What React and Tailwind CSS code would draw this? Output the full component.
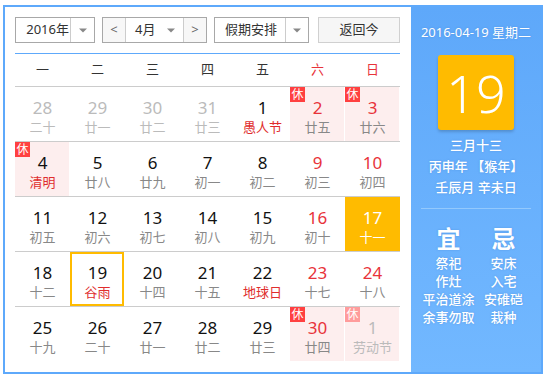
import React from "react";

const FONT = { fontFamily: '"Noto Sans", "Noto Sans CJK SC", sans-serif' };

const weeks = [
  [
    { d: 28, l: "二十", o: true },
    { d: 29, l: "廿一", o: true },
    { d: 30, l: "廿二", o: true },
    { d: 31, l: "廿三", o: true },
    { d: 1, l: "愚人节", f: true },
    { d: 2, l: "廿五", h: true },
    { d: 3, l: "廿六", h: true },
  ],
  [
    { d: 4, l: "清明", h: true, f: true },
    { d: 5, l: "廿八" },
    { d: 6, l: "廿九" },
    { d: 7, l: "初一" },
    { d: 8, l: "初二" },
    { d: 9, l: "初三" },
    { d: 10, l: "初四" },
  ],
  [
    { d: 11, l: "初五" },
    { d: 12, l: "初六" },
    { d: 13, l: "初七" },
    { d: 14, l: "初八" },
    { d: 15, l: "初九" },
    { d: 16, l: "初十" },
    { d: 17, l: "十一", t: true },
  ],
  [
    { d: 18, l: "十二" },
    { d: 19, l: "谷雨", f: true, s: true },
    { d: 20, l: "十四" },
    { d: 21, l: "十五" },
    { d: 22, l: "地球日", f: true },
    { d: 23, l: "十七" },
    { d: 24, l: "十八" },
  ],
  [
    { d: 25, l: "十九" },
    { d: 26, l: "二十" },
    { d: 27, l: "廿一" },
    { d: 28, l: "廿二" },
    { d: 29, l: "廿三" },
    { d: 30, l: "廿四", h: true },
    { d: 1, l: "劳动节", h: true, o: true },
  ],
];

function Arrow() {
  return (
    <svg width="8" height="5" viewBox="0 0 8 5">
      <path d="M0 0.5 L8 0.5 L4 4.5 Z" fill="#888" />
    </svg>
  );
}

function Cell({ c, col }) {
  const weekend = col >= 5;
  let numColor = "text-[#111]";
  let lunColor = "text-[#888]";
  if (weekend) numColor = "text-[#e8333a]";
  if (c.f) lunColor = "text-[#e02d2d]";
  if (c.o) {
    numColor = "text-[#bbb]";
    lunColor = "text-[#bbb]";
  }
  if (c.t) {
    numColor = "text-white";
    lunColor = "text-white";
  }
  let bg = "";
  if (c.h) bg = "bg-[#fdeeee]";
  if (c.t) bg = "bg-[#ffbb00]";
  return (
    <div className="relative h-[54px]">
      <div
        className={`absolute top-0 left-0 bottom-0 ${c.t ? "right-0" : "right-[1px]"} ${bg} ${
          c.s ? "border-2 border-[#ffbb00]" : ""
        }`}
      />
      {c.h && (
        <div
          className={`absolute top-0 left-0 w-[15px] h-[15px] flex items-center justify-center text-[12px] leading-none text-white ${
            c.o ? "bg-[#ff9c9c]" : "bg-[#ff4040]"
          }`}
        >
          休
        </div>
      )}
      <div className="relative flex flex-col items-center pt-[11px]">
        <div className={`text-[17px] leading-[20px] ${numColor}`}>{c.d}</div>
        <div className={`text-[13px] leading-[18px] ${lunColor}`}>{c.l}</div>
      </div>
    </div>
  );
}

export default function App() {
  const heads = ["一", "二", "三", "四", "五", "六", "日"];
  return (
    <div className="w-[545px] h-[378px] bg-white pt-[5px] pl-[3px]" style={FONT}>
      <div className="w-[540px] h-[369px] border-2 border-[#5ea9fb] flex">
        {/* Left */}
        <div className="w-[406px] pl-[10px] pr-[11px] pt-[10px]">
          <div className="flex items-center h-[26px] text-[13px] text-[#333]">
            <div className="w-[80px] h-[26px] border border-[#a8a8a8] flex">
              <div className="w-[54px] flex items-center justify-end pr-[1px]">2016年</div>
              <div className="flex-1 border-l border-[#ccc] flex items-center justify-center">
                <Arrow />
              </div>
            </div>
            <div className="ml-[7px] w-[105px] h-[26px] border border-[#a8a8a8] flex">
              <div className="w-[22px] bg-[#f7f7f7] flex items-center justify-center text-[#666]">&lt;</div>
              <div className="flex-1 border-l border-r border-[#ccc] flex items-center">
                <span className="ml-[9px]">4月</span>
                <span className="ml-auto mr-[8px] flex">
                  <Arrow />
                </span>
              </div>
              <div className="w-[22px] bg-[#f7f7f7] flex items-center justify-center text-[#666]">&gt;</div>
            </div>
            <div className="ml-[7px] w-[95px] h-[26px] border border-[#a8a8a8] flex">
              <div className="w-[70px] flex items-center justify-center pl-[2px]">假期安排</div>
              <div className="flex-1 border-l border-[#ccc] flex items-center justify-center">
                <Arrow />
              </div>
            </div>
            <div className="ml-[9px] w-[82px] h-[26px] border border-[#d0d0d0] bg-[#f6f6f6] flex items-center justify-center">
              返回今
            </div>
          </div>
          <div className="mt-[10px] h-[1px] bg-[#5ea9fb]" />
          <div className="grid grid-cols-7 h-[33px] border-b border-[#ccc] text-[13px] items-center">
            {heads.map((h, i) => (
              <div key={i} className={`text-center ${i >= 5 ? "text-[#e8333a]" : "text-[#333]"}`}>
                {h}
              </div>
            ))}
          </div>
          {weeks.map((w, ri) => (
            <div
              key={ri}
              className={`grid grid-cols-7 ${ri < 4 ? "border-b border-[#ccc]" : ""}`}
            >
              {w.map((c, ci) => (
                <Cell key={ci} c={c} col={ci} />
              ))}
            </div>
          ))}
        </div>
        {/* Right */}
        <div
          className="w-[130px] bg-gradient-to-b from-[#5ea8fa] to-[#72b8ff] text-white px-[10px] flex flex-col items-center"
          style={{ textShadow: "0 0 2px rgba(40,100,180,0.35)" }}
        >
          <div className="mt-[15px] -mx-[10px] text-[13px] leading-[20px] whitespace-nowrap">
            2016-04-19 星期二
          </div>
          <div className="mt-[13px] w-[76px] h-[75px] bg-[#ffbb00] rounded-[3px] shadow-[0_2px_3px_rgba(0,0,0,0.18)] flex items-center justify-center">
            <span className="text-[52px] font-light leading-none" style={{ textShadow: "none" }}>
              19
            </span>
          </div>
          <div className="mt-[5px] text-[13px] leading-[21px] font-medium whitespace-nowrap">三月十三</div>
          <div className="text-[13px] leading-[21px] font-medium whitespace-nowrap">丙申年 【猴年】</div>
          <div className="text-[13px] leading-[21px] font-medium whitespace-nowrap">壬辰月 辛未日</div>
          <div className="mt-[10px] w-full h-[1px] bg-[#93c9fd]" />
          <div className="w-full grid grid-cols-2 mt-[15px]">
            <div className="flex flex-col items-center">
              <div className="text-[24px] leading-[30px] font-bold">宜</div>
              <div className="text-[13px] leading-[18px] font-medium text-center whitespace-nowrap">
                <div>祭祀</div>
                <div>作灶</div>
                <div>平治道涂</div>
                <div>余事勿取</div>
              </div>
            </div>
            <div className="flex flex-col items-center">
              <div className="text-[24px] leading-[30px] font-bold">忌</div>
              <div className="text-[13px] leading-[18px] font-medium text-center whitespace-nowrap">
                <div>安床</div>
                <div>入宅</div>
                <div>安碓硙</div>
                <div>栽种</div>
              </div>
            </div>
          </div>
        </div>
      </div>
    </div>
  );
}
